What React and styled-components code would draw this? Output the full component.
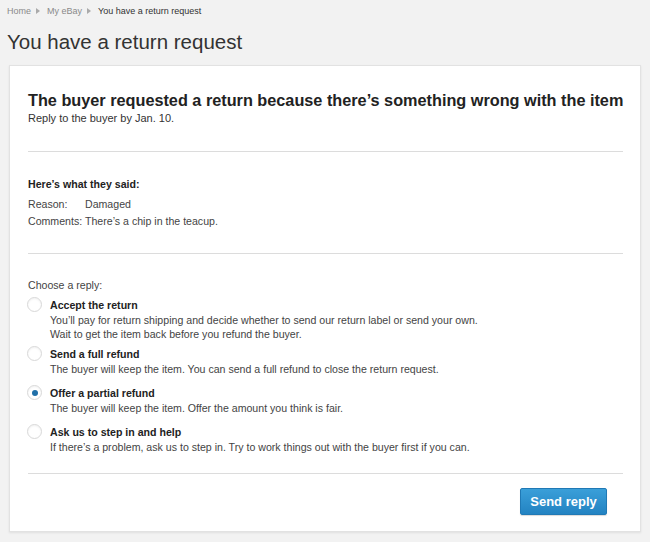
import React from "react";
import styled, { createGlobalStyle } from "styled-components";

const Global = createGlobalStyle`
  html, body { margin: 0; padding: 0; }
  body {
    background: #f2f2f2;
    font-family: "Liberation Sans", Arial, sans-serif;
    color: #333;
  }
`;

const Page = styled.div`
  width: 650px;
  height: 542px;
  box-sizing: border-box;
  padding: 4px 9px 0 7px;
  display: flex;
  flex-direction: column;
`;

const Crumbs = styled.nav`
  display: flex;
  align-items: center;
  font-size: 9px;
  color: #888;
  height: 14px;
`;

const Crumb = styled.span`
  color: ${(p) => (p.$current ? "#333" : "#8a8a8a")};
`;

const Arrow = styled.span`
  width: 0;
  height: 0;
  border-top: 3px solid transparent;
  border-bottom: 3px solid transparent;
  border-left: 4px solid #aaa;
  margin: 0 7px 0 5px;
`;

const Title = styled.h1`
  margin: 12px 0 11px;
  font-size: 20.5px;
  font-weight: normal;
  color: #333;
  line-height: 24px;
`;

const Card = styled.section`
  margin-left: 2px;
  background: #fff;
  border: 1px solid #e2e2e2;
  box-shadow: 0 1px 2px rgba(0, 0, 0, 0.08);
  padding: 24px 17px 16px 18px;
  height: 467px;
  box-sizing: border-box;
`;

const Heading = styled.h2`
  margin: 0;
  font-size: 16.25px;
  font-weight: bold;
  color: #222;
  line-height: 20px;
  white-space: nowrap;
`;

const Sub = styled.p`
  margin: 1px 0 0;
  font-size: 11px;
  line-height: 14px;
  color: #333;
`;

const Divider = styled.hr`
  border: 0;
  border-top: 1px solid #dcdcdc;
  margin: ${(p) => p.$m};
`;

const Label = styled.div`
  font-size: 10.6px;
  line-height: 14px;
  font-weight: bold;
  color: #222;
  margin-top: 25px;
`;

const Facts = styled.dl`
  display: grid;
  grid-template-columns: 57px 1fr;
  row-gap: 3px;
  margin: 6px 0 0;
  font-size: 10.6px;
  line-height: 14px;
  color: #444;
  dt, dd { margin: 0; }
`;

const Choose = styled.div`
  font-size: 10.6px;
  line-height: 14px;
  color: #444;
  margin-top: 24px;
`;

const Options = styled.div`
  display: flex;
  flex-direction: column;
  gap: 9px;
  margin-top: 5px;
`;

const Option = styled.label`
  display: grid;
  grid-template-columns: 22px 1fr;
  margin-bottom: ${(p) => (p.$pull ? "-4px" : "0")};
`;

const Radio = styled.span`
  width: 15px;
  height: 15px;
  box-sizing: border-box;
  border-radius: 50%;
  border: 1px solid #d8d8d8;
  background: #fff;
  box-shadow: inset 0 1px 2px rgba(0,0,0,0.06);
  margin: 0 0 0 -1px;
  display: flex;
  align-items: center;
  justify-content: center;
  &::after {
    content: "";
    width: 6px;
    height: 6px;
    border-radius: 50%;
    background: ${(p) => (p.$checked ? "#1f6fa8" : "transparent")};
  }
`;

const OptTitle = styled.div`
  font-size: 10.6px;
  font-weight: bold;
  color: #222;
  line-height: 16px;
`;

const OptDesc = styled.div`
  font-size: 10.6px;
  color: #444;
  line-height: 14px;
`;

const Footer = styled.div`
  display: flex;
  justify-content: flex-end;
  padding-right: 16px;
  margin-top: 14px;
`;

const Button = styled.button`
  width: 87px;
  height: 27px;
  border: 1px solid #2079b5;
  border-radius: 2px;
  background: linear-gradient(#3a9fd9, #2383c2);
  color: #fff;
  font-family: "Liberation Sans", Arial, sans-serif;
  font-weight: bold;
  font-size: 13px;
  box-shadow: 0 1px 1px rgba(0,0,0,0.15);
`;

const options = [
  {
    title: "Accept the return",
    desc: [
      "You’ll pay for return shipping and decide whether to send our return label or send your own.",
      "Wait to get the item back before you refund the buyer.",
    ],
    pull: true,
  },
  {
    title: "Send a full refund",
    desc: ["The buyer will keep the item. You can send a full refund to close the return request."],
  },
  {
    title: "Offer a partial refund",
    desc: ["The buyer will keep the item. Offer the amount you think is fair."],
    checked: true,
  },
  {
    title: "Ask us to step in and help",
    desc: ["If there’s a problem, ask us to step in. Try to work things out with the buyer first if you can."],
  },
];

export default function App() {
  return (
    <>
      <Global />
      <Page>
        <Crumbs>
          <Crumb>Home</Crumb>
          <Arrow />
          <Crumb>My eBay</Crumb>
          <Arrow />
          <Crumb $current>You have a return request</Crumb>
        </Crumbs>
        <Title>You have a return request</Title>
        <Card>
          <Heading>The buyer requested a return because there’s something wrong with the item</Heading>
          <Sub>Reply to the buyer by Jan. 10.</Sub>
          <Divider $m="26px 0 0" />
          <Label>Here’s what they said:</Label>
          <Facts>
            <dt>Reason:</dt>
            <dd>Damaged</dd>
            <dt>Comments:</dt>
            <dd>There’s a chip in the teacup.</dd>
          </Facts>
          <Divider $m="25px 0 0" />
          <Choose>Choose a reply:</Choose>
          <Options>
            {options.map((o) => (
              <Option key={o.title} $pull={o.pull}>
                <Radio $checked={o.checked} />
                <div>
                  <OptTitle>{o.title}</OptTitle>
                  {o.desc.map((d) => (
                    <OptDesc key={d}>{d}</OptDesc>
                  ))}
                </div>
              </Option>
            ))}
          </Options>
          <Divider $m="19px 0 0" />
          <Footer>
            <Button>Send reply</Button>
          </Footer>
        </Card>
      </Page>
    </>
  );
}
